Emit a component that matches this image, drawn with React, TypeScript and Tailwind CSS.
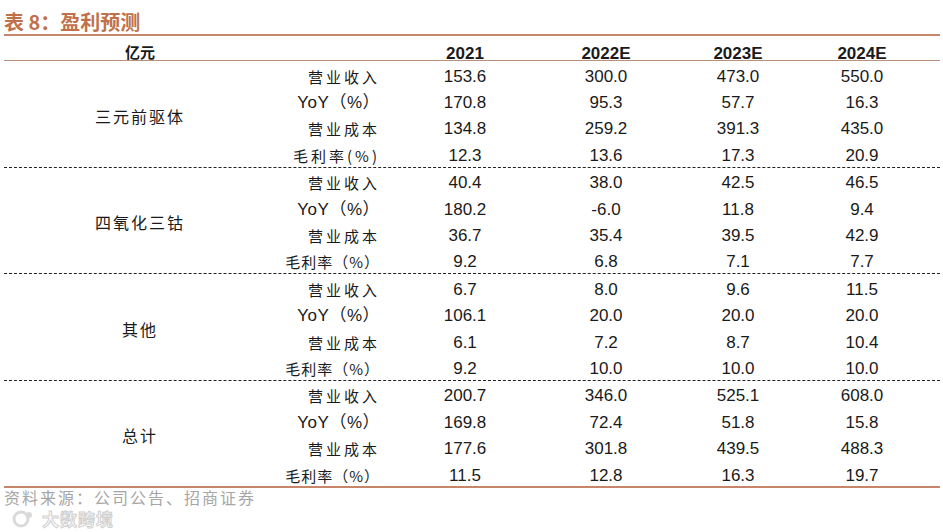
const groups = [
  {
    name: "三元前驱体",
    rows: [
      ["营业收入", "153.6", "300.0", "473.0", "550.0"],
      ["YoY（%）", "170.8", "95.3", "57.7", "16.3"],
      ["营业成本", "134.8", "259.2", "391.3", "435.0"],
      ["毛利率(%)", "12.3", "13.6", "17.3", "20.9"],
    ],
  },
  {
    name: "四氧化三钴",
    rows: [
      ["营业收入", "40.4", "38.0", "42.5", "46.5"],
      ["YoY（%）", "180.2", "-6.0", "11.8", "9.4"],
      ["营业成本", "36.7", "35.4", "39.5", "42.9"],
      ["毛利率（%）", "9.2", "6.8", "7.1", "7.7"],
    ],
  },
  {
    name: "其他",
    rows: [
      ["营业收入", "6.7", "8.0", "9.6", "11.5"],
      ["YoY（%）", "106.1", "20.0", "20.0", "20.0"],
      ["营业成本", "6.1", "7.2", "8.7", "10.4"],
      ["毛利率（%）", "9.2", "10.0", "10.0", "10.0"],
    ],
  },
  {
    name: "总计",
    rows: [
      ["营业收入", "200.7", "346.0", "525.1", "608.0"],
      ["YoY（%）", "169.8", "72.4", "51.8", "15.8"],
      ["营业成本", "177.6", "301.8", "439.5", "488.3"],
      ["毛利率（%）", "11.5", "12.8", "16.3", "19.7"],
    ],
  },
];

const cjk = "font-['Noto_Sans_CJK_SC',sans-serif]";
const num = "font-['Liberation_Sans','Noto_Sans_CJK_SC',sans-serif]";
const cols = ["w-[170px]", "w-[112px]", "w-[152px]", "w-[96px]"];

function labelClass(label: string) {
  if (label.startsWith("YoY")) return `${num} text-[17px] tracking-[0.5px]`;
  if (label.includes("（")) return `${cjk} text-[15px] tracking-[1px]`;
  return `${cjk} text-[15px] tracking-[3px]`;
}

export default function App() {
  return (
    <div className="w-[943px] h-[532px] bg-white overflow-hidden px-[4px] text-[#1a1a1a]">
      {/* Title */}
      <div
        className={`h-[34px] flex items-end pb-[2px] text-[20px] font-bold leading-none text-[#c0714b] ${cjk}`}
      >
        表 8：盈利预测
      </div>
      <div className="w-[936px] h-[2px] bg-[#c7856a]" />

      <div className="w-[936px]">
        {/* Header */}
        <div className="h-[25px] flex items-center pt-[7px] border-b border-[#b8927f]">
          <div className={`w-[272px] text-center text-[15px] font-bold leading-none ${cjk}`}>
            亿元
          </div>
          <div className="w-[104px]" />
          {["2021", "2022E", "2023E", "2024E"].map((y, i) => (
            <div key={y} className={`${cols[i]} mt-[4px] text-center text-[17px] font-bold leading-none ${num}`}>
              {y}
            </div>
          ))}
        </div>

        {/* Groups */}
        {groups.map((g, gi) => (
          <div
            key={g.name}
            className={`flex ${
              gi === groups.length - 1
                ? "border-b-2 border-solid border-[#c7856a]"
                : "border-b border-dashed border-[#222]"
            }`}
          >
            <div
              className={`w-[272px] flex items-center justify-center pt-[4px] text-[16px] tracking-[2px] ${cjk}`}
            >
              {g.name}
            </div>
            <div className="flex flex-col">
              {g.rows.map((r) => (
                <div key={r[0]} className="h-[26.4px] flex items-center pt-[4px]">
                  <div className={`w-[104px] text-right leading-none whitespace-nowrap ${labelClass(r[0])}`}>
                    {r[0]}
                  </div>
                  {r.slice(1).map((v, i) => (
                    <div key={i} className={`${cols[i]} text-center text-[17px] leading-none ${num}`}>
                      {v}
                    </div>
                  ))}
                </div>
              ))}
            </div>
          </div>
        ))}
      </div>

      {/* Source + watermark */}
      <div className={`text-[16px] leading-[18px] tracking-[2px] text-[#a6a6a6] ${cjk}`}>
        资料来源：公司公告、招商证券
      </div>
      <div className="flex items-center gap-[4px] pl-[6px] pt-[3px]">
        <svg width="28" height="20" viewBox="0 0 28 20">
          <circle cx="11" cy="10" r="7" fill="none" stroke="#dadada" strokeWidth="3" />
          <circle cx="19" cy="6" r="3" fill="#dadada" />
        </svg>
        <span
          className={`text-[17px] leading-[20px] font-bold tracking-[1px] text-white ${cjk} [-webkit-text-stroke:1px_#d0d0d0]`}
        >
          大数跨境
        </span>
      </div>
    </div>
  );
}
